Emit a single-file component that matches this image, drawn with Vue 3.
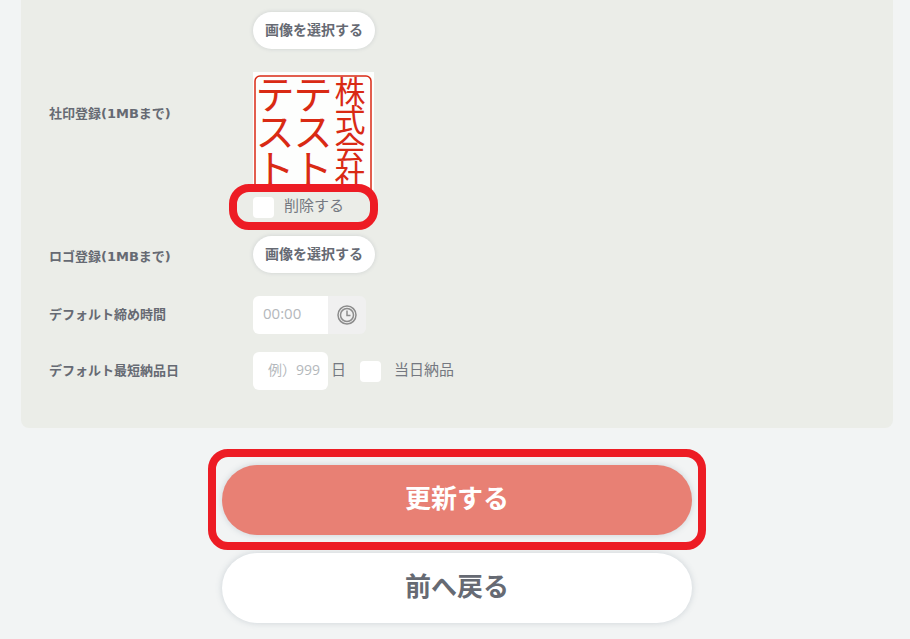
<template>
  <main class="page">
    <form class="settings" @submit.prevent>
      <section class="panel">
        <div class="row">
          <span class="row-label"></span>
          <div class="row-value">
            <button type="button" class="pick-button">画像を選択する</button>
          </div>
        </div>

        <div class="row row-seal">
          <span class="row-label">社印登録(1MBまで)</span>
          <div class="row-value">
            <svg class="seal" viewBox="0 0 121 118" role="img" aria-label="社印">
              <rect class="seal-frame" x="2" y="4" width="116" height="130" rx="5" />
              <g v-for="column in sealColumns" :key="column.x" :font-size="column.size">
                <text
                  v-for="(char, i) in column.text"
                  :key="i"
                  :x="column.x"
                  :y="column.top + i * column.step"
                >{{ char }}</text>
              </g>
            </svg>
            <div class="delete-row">
              <label class="check">
                <input v-model="removeSeal" type="checkbox" />
                <span>削除する</span>
              </label>
              <span class="mark mark-delete"></span>
            </div>
          </div>
        </div>

        <div class="row row-logo">
          <span class="row-label">ロゴ登録(1MBまで)</span>
          <div class="row-value">
            <button type="button" class="pick-button">画像を選択する</button>
          </div>
        </div>

        <div class="row">
          <label class="row-label" for="closing-time">デフォルト締め時間</label>
          <div class="row-value time-group">
            <input id="closing-time" v-model="closingTime" class="field" type="text" placeholder="00:00" />
            <button type="button" class="clock-button" aria-label="時間を選択">
              <svg viewBox="0 0 20 20" width="20" height="20">
                <circle cx="10" cy="10" r="9" />
                <circle cx="10" cy="10" r="6.5" />
                <path d="M10 5.5V10.5H13.5" />
              </svg>
            </button>
          </div>
        </div>

        <div class="row">
          <label class="row-label" for="lead-days">デフォルト最短納品日</label>
          <div class="row-value days-group">
            <input id="lead-days" v-model="leadDays" class="field field-days" type="text" placeholder="例）999" />
            <span class="unit">日</span>
            <label class="check check-wide">
              <input v-model="sameDay" type="checkbox" />
              <span>当日納品</span>
            </label>
          </div>
        </div>
      </section>

      <div class="actions">
        <div class="action-wrap">
          <button type="submit" class="action action-primary">更新する</button>
          <span class="mark mark-submit"></span>
        </div>
        <button type="button" class="action">前へ戻る</button>
      </div>
    </form>
  </main>
</template>

<script setup>
import { ref } from 'vue'

const removeSeal = ref(false)
const closingTime = ref('')
const leadDays = ref('')
const sameDay = ref(false)

// read right to left, as on a square company seal
const sealColumns = [
  { x: 97, top: 31, step: 28, size: 31, text: [...'株式会社'] },
  { x: 60, top: 37, step: 37, size: 39, text: [...'テスト'] },
  { x: 22, top: 37, step: 37, size: 39, text: [...'テスト'] },
]
</script>

<style>
body {
  margin: 0;
  background: #f2f4f4;
}
</style>

<style scoped>
.page {
  padding: 0 17px 16px 21px;
  color: #666a73;
  font-family: "Open Sans", "Noto Sans CJK JP", sans-serif;
  font-size: 15px;
  line-height: 20px;
}

.page * {
  box-sizing: border-box;
}

.panel {
  display: flex;
  flex-direction: column;
  gap: 18px;
  padding: 12px 28px 38px;
  background: #ebede8;
  border-radius: 0 0 8px 8px;
}

.row {
  display: grid;
  grid-template-columns: 204px 1fr;
  align-items: center;
}

.row-seal {
  align-items: start;
  margin-top: 5px;
}

.row-seal .row-label {
  padding-top: 32px;
}

.row-logo {
  margin-bottom: 5px;
}

.row-logo .row-label {
  padding-top: 4px;
}

.row-label {
  font-family: "DejaVu Sans", "Noto Sans CJK JP", sans-serif;
  font-size: 13px;
  font-weight: 700;
}

button,
input {
  margin: 0;
  border: 0;
  color: inherit;
  font-family: inherit;
}

button {
  cursor: pointer;
}

.pick-button {
  display: block;
  height: 37px;
  padding: 0 12px 4px;
  background: #fff;
  border-radius: 19px;
  box-shadow: 0 0 4px rgba(90, 100, 120, 0.2);
  font-size: 14px;
  font-weight: 700;
}

.seal {
  display: block;
  width: 121px;
  height: 118px;
  background: #fdfefd;
}

.seal-frame {
  fill: none;
  stroke: #d92a14;
  stroke-width: 1.5;
}

.seal text {
  fill: #d92a14;
  font-family: "Noto Sans CJK JP", sans-serif;
  text-anchor: middle;
}

.delete-row {
  position: relative;
  width: fit-content;
  padding-top: 7px;
}

.check {
  display: flex;
  align-items: center;
  gap: 10px;
}

.check span {
  padding-bottom: 4px;
  line-height: 17px;
}

.check-wide {
  gap: 13px;
}

.check input {
  appearance: none;
  width: 21px;
  height: 21px;
  background: #fff;
  border-radius: 4px;
}

.check input:checked {
  background: #e88074;
}

.check span,
.unit {
  color: #757981;
}

.time-group,
.days-group {
  display: flex;
  align-items: center;
}

.field {
  width: 75px;
  height: 38px;
  padding: 0 10px 4px;
  background: #fff;
  border-radius: 6px;
  font-size: 15px;
}

.field::placeholder {
  color: #b4b8bc;
  opacity: 1;
}

.time-group .field {
  border-radius: 6px 0 0 6px;
}

.field-days {
  padding: 0 8px 4px;
  font-size: 14px;
  text-align: right;
}

.unit {
  margin: 0 14px 0 3px;
  padding-bottom: 4px;
  line-height: 17px;
}

.clock-button {
  display: grid;
  place-items: center;
  width: 38px;
  height: 38px;
  padding: 0;
  background: #f0f0f0;
  border-radius: 0 6px 6px 0;
}

.clock-button svg {
  fill: none;
  stroke: #8c8c8c;
  stroke-width: 1.5;
}

.actions {
  display: flex;
  flex-direction: column;
  align-items: center;
  gap: 18px;
  padding-top: 37px;
}

.action-wrap {
  position: relative;
  width: 100%;
  max-width: 470px;
}

.action {
  display: block;
  width: 100%;
  max-width: 470px;
  height: 70px;
  padding: 0 0 6px;
  background: #fff;
  border-radius: 35px;
  box-shadow: 0 0 6px rgba(90, 110, 130, 0.25);
  font-size: 26px;
  font-weight: 700;
}

.action-primary {
  background: #e88074;
  color: #fff;
}

/* red call-outs drawn over the form */
.mark {
  position: absolute;
  border: 8px solid #ed1c24;
  border-radius: 20px;
  pointer-events: none;
}

.mark-delete {
  inset: -6px -34px -12px -24px;
}

.mark-submit {
  inset: -16px -14px -15px;
}
</style>
